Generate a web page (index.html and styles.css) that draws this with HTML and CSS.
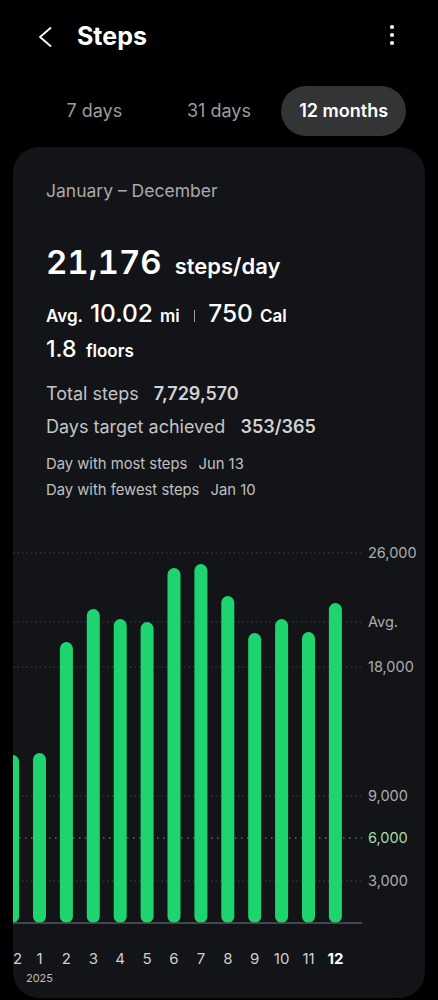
FILE: index.html
```html
<!DOCTYPE html>
<html lang="en">
<head>
  <meta charset="UTF-8">
  <title>Steps</title>
  <link rel="stylesheet" href="styles.css">
</head>
<body>
  <header class="top-bar">
    <svg class="back" width="16" height="22" viewBox="0 0 16 22">
      <path d="M13.5 2 L3 11 L13.5 20" fill="none" stroke="#fff" stroke-width="1.8" stroke-linecap="round" stroke-linejoin="round"/>
    </svg>
    <h1 class="title">Steps</h1>
    <svg class="more" width="6" height="22" viewBox="0 0 6 22">
      <circle cx="3" cy="3" r="2.1" fill="#fff"/>
      <circle cx="3" cy="11" r="2.1" fill="#fff"/>
      <circle cx="3" cy="19" r="2.1" fill="#fff"/>
    </svg>
  </header>

  <nav class="tabs">
    <span class="tab">7 days</span>
    <span class="tab">31 days</span>
    <span class="tab active">12 months</span>
  </nav>

  <section class="card">
    <div class="summary">
      <p class="range">January – December</p>
      <div class="headline"><span class="big">21,176</span><span class="unit">steps/day</span></div>
      <div class="avg-row">
        <span class="sm">Avg.</span> <span class="num">10.02</span> <span class="sm">mi</span>
        <span class="sep"></span>
        <span class="num">750</span> <span class="sm">Cal</span>
      </div>
      <div class="floors"><span class="num">1.8</span> <span class="sm">floors</span></div>
      <div class="stat">Total steps <b>7,729,570</b></div>
      <div class="stat stat-gap">Days target achieved <b>353/365</b></div>
      <div class="record first">Day with most steps <span>Jun 13</span></div>
      <div class="record">Day with fewest steps <span>Jan 10</span></div>
    </div>

    <svg class="chart" width="412" height="468" viewBox="13 530 412 468">
      <g class="grid">
        <line x1="13" x2="362" y1="553" y2="553"/>
        <line x1="13" x2="362" y1="622" y2="622"/>
        <line x1="13" x2="362" y1="667" y2="667"/>
        <line x1="13" x2="362" y1="796" y2="796"/>
        <line x1="13" x2="362" y1="881" y2="881"/>
      </g>
      <line class="target" x1="13" x2="362" y1="838" y2="838"/>

      <g class="bars">
        <rect x="6.1" y="755" width="13" height="168" rx="6.5"/>
        <rect x="33" y="753" width="13" height="170" rx="6.5"/>
        <rect x="59.9" y="642" width="13" height="281" rx="6.5"/>
        <rect x="86.8" y="609" width="13" height="314" rx="6.5"/>
        <rect x="113.7" y="619" width="13" height="304" rx="6.5"/>
        <rect x="140.6" y="622" width="13" height="301" rx="6.5"/>
        <rect x="167.5" y="568" width="13" height="355" rx="6.5"/>
        <rect x="194.4" y="564" width="13" height="359" rx="6.5"/>
        <rect x="221.3" y="596" width="13" height="327" rx="6.5"/>
        <rect x="248.2" y="633" width="13" height="290" rx="6.5"/>
        <rect x="275.1" y="619" width="13" height="304" rx="6.5"/>
        <rect x="302" y="632" width="13" height="291" rx="6.5"/>
        <rect x="328.9" y="603" width="13" height="320" rx="6.5"/>
      </g>
      <line class="axis" x1="13" x2="362" y1="923" y2="923"/>

      <g class="y-labels">
        <text x="368" y="558">26,000</text>
        <text x="368" y="627">Avg.</text>
        <text x="368" y="672">18,000</text>
        <text x="368" y="801">9,000</text>
        <text x="368" y="843" class="goal">6,000</text>
        <text x="368" y="886">3,000</text>
      </g>

      <g class="x-labels">
        <text x="17.5" y="964">2</text>
        <text x="39.5" y="964">1</text>
        <text x="66.4" y="964">2</text>
        <text x="93.3" y="964">3</text>
        <text x="120.2" y="964">4</text>
        <text x="147.1" y="964">5</text>
        <text x="174" y="964">6</text>
        <text x="200.9" y="964">7</text>
        <text x="227.8" y="964">8</text>
        <text x="254.7" y="964">9</text>
        <text x="281.6" y="964">10</text>
        <text x="308.5" y="964">11</text>
        <text x="335.4" y="964" class="current">12</text>
        <text x="39.5" y="982" class="year">2025</text>
      </g>
    </svg>
  </section>
</body>
</html>
```

FILE: styles.css
```css
* {
  box-sizing: border-box;
}

body {
  margin: 0;
  background: #000;
  color: #fff;
  font-family: Inter, Roboto, "Noto Sans", sans-serif;
}

.top-bar {
  display: flex;
  align-items: center;
  height: 72px;
  padding-left: 37px;
  padding-right: 43px;
}

.back {
  margin-top: 2px;
}

.title {
  margin: 0 0 0 24px;
  font-size: 25px;
  font-weight: 700;
}

.more {
  margin-left: auto;
  margin-top: -3px;
}

.tabs {
  display: grid;
  grid-template-columns: repeat(3, 1fr);
  padding: 0 32px;
  margin-top: 14px;
}

.tab {
  height: 50px;
  line-height: 50px;
  text-align: center;
  font-size: 18px;
  color: #9c9c9c;
}

.tab.active {
  background: #333436;
  border-radius: 25px;
  color: #fff;
  font-weight: 600;
}

.card {
  display: flex;
  flex-direction: column;
  height: 851px;
  margin: 11px 13px 0;
  background: #121418;
  border-radius: 26px;
  overflow: hidden;
}

.summary {
  padding: 32px 33px 0;
}

.range {
  margin: 0;
  font-size: 17.5px;
  line-height: 24px;
  color: #a9a9a9;
}

.headline {
  margin-top: 39px;
  font-size: 33px;
  line-height: 40px;
  font-variant-numeric: tabular-nums;
}

.big {
  font-weight: 600;
}

.unit {
  margin-left: 13px;
  font-size: 22px;
  font-weight: 600;
  line-height: 1;
}

.avg-row {
  display: flex;
  align-items: baseline;
  margin-top: 15px;
  font-size: 24.5px;
  line-height: 32px;
}

.avg-row .sm,
.floors .sm {
  font-size: 17px;
  font-weight: 600;
  margin: 0 7px;
}

.avg-row .sm:first-child {
  margin-left: 0;
}

.num {
  font-weight: 500;
}

.sep {
  display: inline-block;
  width: 1.5px;
  height: 12px;
  margin: 0 13px 0 7px;
  background: #9a9a9a;
}

.floors {
  margin-top: 2px;
  font-size: 23px;
  line-height: 30px;
}

.floors .sm {
  margin-left: 3px;
}

.stat {
  margin-top: 13px;
  font-size: 18px;
  line-height: 30px;
  color: #c4c4c4;
}

.stat-gap {
  margin-top: 3px;
}

.stat b {
  margin-left: 10px;
  font-weight: 600;
  color: #d2d2d2;
}

.record {
  font-size: 14.8px;
  line-height: 26px;
  color: #c0c0c0;
}

.record.first {
  margin-top: 9px;
}

.record span {
  margin-left: 7px;
}

.chart {
  display: block;
  margin-top: auto;
}

.grid line {
  stroke: #3d4046;
  stroke-width: 1;
  stroke-dasharray: 1.5 3;
}

.target {
  stroke: #8a8c8e;
  stroke-width: 1;
  stroke-dasharray: 1.5 4.5;
}

.bars rect {
  fill: #1ed46f;
}

.axis {
  stroke: #55575b;
  stroke-width: 1.5;
}

.y-labels text {
  font-size: 14.5px;
  fill: #adadad;
}

.y-labels .goal {
  fill: #a6dfa6;
}

.x-labels text {
  font-size: 15px;
  fill: #cfcfcf;
  text-anchor: middle;
}

.x-labels .current {
  font-weight: 700;
  fill: #fff;
}

.x-labels .year {
  font-size: 11px;
  fill: #bdbdbd;
}
```
